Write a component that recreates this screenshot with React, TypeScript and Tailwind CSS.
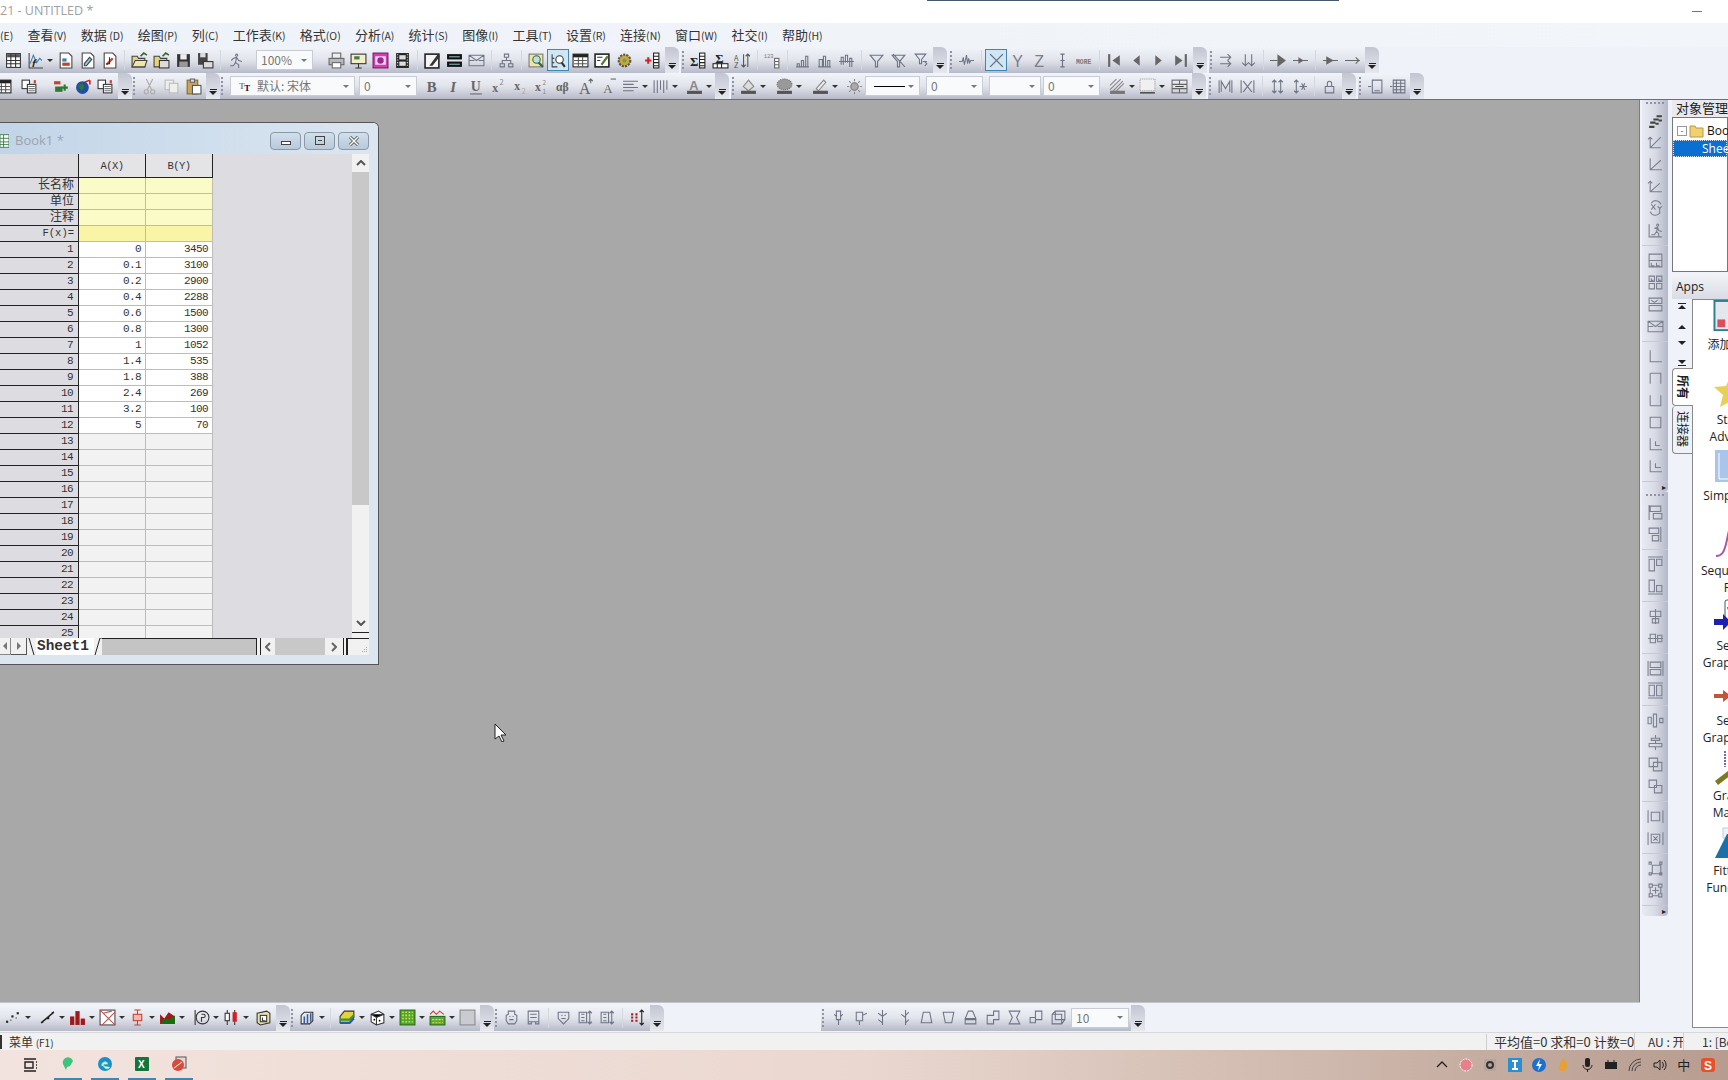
import React from 'react';

const cjk = "font-['Noto_Sans_CJK_SC',sans-serif]";
const mono = "font-['Liberation_Mono','Noto_Sans_CJK_SC',monospace]";

// outline icons, drawn with currentColor
const G: Record<string, string> = {
  runner: 'M9 2a1 1 0 1 0 .1 0M6 6l3-1 2 3 3 1M9 5l-1 5 3 2 0 3M8 10l-2 3-3 0M6 6l-2 2',
  axrun: 'M2 2v12h12M10 2a1 1 0 1 0 .1 0M7 6l3-1 1 3 3 1M10 5l-1 4 2 2v3M9 9l-2 3H4',
  tree: 'M6 2h4v3H6zM2 11h4v3H2zM10 11h4v3h-4zM8 5v3M4 11V8h8v3',
  mail: 'M1 3h14v10H1zM1 3l7 5 7-5M1 8h5M10 8h5',
  filter: 'M2 3h12L9 9v5H7V9z',
  filterx: 'M2 3h12L9 9v5H7V9zM3 2l11 12',
  filterr: 'M3 2h10L9 7v4H7V7zM10 9h4M12 9l2 2-2 2',
  wave: 'M1 9h3l1-4 1 7 2-9 1 8 1-5 1 4 1-2h3',
  arrows2: 'M2 5h10M9 2l3 3-3 3M2 11h10M9 8l3 3-3 3',
  downs: 'M5 2v11M2 10l3 3 3-3M11 2v11M8 10l3 3 3-3',
  barsup: 'M2 14h12M3 14v-3h2v3M7 14V8h2v6M11 14V4h2v10',
  bars2: 'M2 14h12M3 14V7h3v7M7 14V4h2v10M11 14v-6h2v6',
  barsm: 'M1 9h14M3 12V5h2v7M7 10V3h2v7M11 14V6h2v8',
  m: 'M2 2v12M14 2v12M4 13V3l4 7 4-7v10',
  x: 'M2 2v12M14 2v12M4 3l8 10M12 3L4 13',
  updn: 'M5 2v12M3 4l2-2 2 2M3 12l2 2 2-2M11 2v12M9 4l2-2 2 2M9 12l2 2 2-2',
  updn2: 'M5 2v12M3 4l2-2 2 2M3 12l2 2 2-2M8 8h7M10 5l3 6M13 5l-3 6',
  lock: 'M4 8h8v6H4zM6 8V5a2 2 0 0 1 4 0v3',
  frame: 'M1 8h3M5 2h9v12H5zM7 12h5',
  tablef: 'M1 8h2M4 2h11v12H4zM4 5h11M4 8h11M4 11h11M7 2v12M11 2v12',
  ax1: 'M3 3v10h10M3 3l-2 2M3 3l2 2M3 13L13 3',
  ax2: 'M3 2v11h11M3 13L13 4',
  ax3: 'M3 3v10h11M1 5l2-2 2 2M3 13l9-8',
  xy: 'M4 4l4 5M8 4L4 9M10 6l2 2 2-2M12 8v5M3 11a5 5 0 0 0 9 1M13 4a5 5 0 0 0-9-1',
  lay1: 'M2 2h12v12H2zM2 8h12M4 10v3h3M9 10v3h3',
  lay2: 'M2 2h5v5H2zM9 2h5v5H9zM2 9h5v5H2zM9 9h5v5H9zM4 4v2h2M11 4v2h2',
  lay3: 'M2 2h12v5H2zM2 9h12v5H2zM4 4l3 2 3-2',
  sq1: 'M3 2v11h11',
  sq2: 'M3 3h10v10M3 3v10',
  sq3: 'M13 3v10H3M3 3v10',
  sq4: 'M3 3h10v10H3z',
  sq5: 'M3 2v11h11M8 5v4h4',
  sq6: 'M3 2v11h11M8 5v4h5',
  al1: 'M3 2h10v5H3zM6 9h8v5H6zM2 1v14',
  al2: 'M2 2h9v5H2zM5 9h6v5H5zM13 1v14',
  al3: 'M2 3h5v11H2zM9 3h5v6H9zM1 1h14',
  al4: 'M2 2h5v11H2zM9 7h5v6H9zM1 15h14',
  al5: 'M8 1v14M3 3h10v5H3zM5 10h6v4H5z',
  al6: 'M1 8h14M3 4h5v8H3zM10 5h4v6h-4z',
  al7: 'M3 2h10v5H3zM3 9h10v5H3zM1 1v14M15 1v14',
  al8: 'M2 3h5v10H2zM9 3h5v10H9zM1 1h14M1 15h14',
  al9: 'M1 5h3v6H1zM6 2h3v12H6zM12 6h3v4h-3z',
  al10: 'M8 1v3M8 6v3M8 12v3M4 4h8v2H4zM2 9h12v3H2z',
  ov1: 'M2 2h8v8H2zM6 6h8v8H6z',
  ov2: 'M2 2h7v7H2zM7 7h7v7H7z',
  dash1: 'M4 4h8v8H4zM1 2v12M15 2v12',
  dash2: 'M4 4h8v8H4zM6 6l4 4M10 6l-4 4M1 2v12M15 2v12',
  res1: 'M2 2h2v2H2zM12 2h2v2h-2zM2 12h2v2H2zM12 12h2v2h-2zM5 5h8v8H5z',
  res2: 'M2 2h3v3H2zM11 2h3v3h-3zM2 11h3v3H2zM11 11h3v3h-3zM5 3h6M5 13h6M3 5v6M13 5v6M8 5v6M5 8h6',
  fmtl: 'M1 3h14M1 6h10M1 9h14M1 12h10',
  fmtc: 'M2 2v12M5 2v12M8 2v9M11 2v12M14 2v9',
  gp1: 'M5 2h6v3l2 1v5l-2 3H5l-2-3V6l2-1zM6 7h1M9 7h1M6 10h4',
  gp2: 'M3 2h10v10H3zM3 12v2h3v-2M10 12v2h3v-2M5 5h6M5 8h6',
  gp3: 'M3 3h10v6l-5 5-5-5zM6 6h1M9 6h1M6 9h4',
  gp4: 'M2 3h7v10H2zM4 5h3M4 8h3M4 11h3M12 2v12M10 4l2-2 2 2M10 12l2 2 2-2',
  d1: 'M6 2h4v8H6zM8 10v5M4 5l2 2M12 5l-2 2',
  d2: 'M4 3h6v8H4zM7 11v4M10 6l4-2',
  d3: 'M8 1v14M4 4l4 3M12 4L8 7M4 10l4 3',
  d4: 'M9 1v14M12 3L9 6M5 5l4 3M12 10l-3 3',
  tr1: 'M5 3h6l2 10H3zM3 13h10',
  tr2: 'M3 3h10l-2 10H5zM3 3h10',
  tr3: 'M6 2h4l3 7H3zM3 10h10v4H3z',
  tr4: 'M3 6h6V2h5v8H9v4H3z',
  tr5: 'M3 2h10l-3 6 3 6H3l3-6z',
  tr6: 'M7 2h6v8H7zM2 8h5v5H2z',
  tr7: 'M5 2h9v8H5zM2 5l3-3M2 5v9h9l3-4M2 5h9v9',
};

// colour icons
const C: Record<string, React.ReactNode> = {
  stairs: <path d="M9 3h5v2H9zM6 6h5v2H6zM11 7h3v2h-3zM3 9h5v2H3zM8 10h3v2H8zM2 13h5v2H2z" fill="#444" />,
  grid: <><rect x="1.5" y="1.5" width="13" height="13" fill="#fff" stroke="#333" /><rect x="2" y="2" width="12" height="3" fill="#555" /><path d="M1.5 8h13M1.5 11h13M5.5 2v12M10 2v12" stroke="#333" /></>,
  fx: <><path d="M2 1v14h13" fill="none" stroke="#444" /><path d="M3 11l3-8 3 7 3-4 2 2" fill="none" stroke="#3c7fb0" /><text x="4" y="14" fontSize="9" fontStyle="italic" fontWeight="700" fill="#222">f</text></>,
  doc1: <><path d="M3 1h8l3 3v11H3z" fill="#fff" stroke="#444" /><rect x="5" y="6" width="4" height="3" fill="#3c7fb0" /><rect x="5" y="10" width="7" height="3" fill="#c8402e" /></>,
  doc2: <><path d="M3 1h8l3 3v11H3z" fill="#fff" stroke="#444" /><path d="M5 11l5-6 2 2-5 6H5z" fill="#9cc1c8" stroke="#345" /></>,
  doc3: <><path d="M3 1h8l3 3v11H3z" fill="#fff" stroke="#444" /><path d="M5 12l6-6" stroke="#c8402e" strokeWidth="2" /><path d="M8 5v6H5" fill="none" stroke="#333" /></>,
  open: <><path d="M1 14V4h5l1 2h6v8z" fill="#e6d37a" stroke="#444" /><path d="M1 14l3-6h11l-2 6z" fill="#f1e6a8" stroke="#444" /><path d="M9 4l3-3 3 2" fill="none" stroke="#2d6b2d" strokeWidth="1.5" /></>,
  open2: <><path d="M1 14V4h5l1 2h6v8z" fill="#e6d37a" stroke="#444" /><rect x="6" y="8" width="9" height="7" fill="#dcdcdc" stroke="#333" /><path d="M9 4l3-3 3 2" fill="none" stroke="#2d6b2d" strokeWidth="1.5" /></>,
  save: <><path d="M2 2h12v12H2z" fill="#333" /><rect x="5" y="2" width="6" height="5" fill="#eee" /><rect x="4" y="9" width="8" height="5" fill="#999" /></>,
  save2: <><path d="M1 1h9v11H1z" fill="#444" /><rect x="3" y="1" width="5" height="4" fill="#ddd" /><rect x="6" y="9" width="9" height="6" fill="#dcdcdc" stroke="#333" /></>,
  printer: <><rect x="4" y="1" width="8" height="5" fill="#eee" stroke="#666" /><rect x="1" y="6" width="14" height="6" fill="#b5b8bf" stroke="#666" /><rect x="4" y="10" width="8" height="5" fill="#fff" stroke="#666" /></>,
  slide: <><rect x="1" y="2" width="14" height="9" fill="#f3edc8" stroke="#333" /><rect x="4" y="4" width="5" height="3" fill="#4a7a4a" /><path d="M8 11v4M5 15h6" stroke="#333" /></>,
  pink: <><rect x="1" y="1" width="14" height="14" fill="#d63bb8" stroke="#6b2060" /><rect x="3" y="4" width="10" height="8" fill="#eed7e8" /><circle cx="8" cy="8" r="3" fill="#9a2a8a" /></>,
  film: <><rect x="2" y="1" width="12" height="14" fill="#222" /><rect x="5" y="3" width="6" height="4" fill="#ddd" /><rect x="5" y="9" width="6" height="4" fill="#ddd" /><path d="M3.5 2v12M12.5 2v12" stroke="#fff" strokeDasharray="1 1.5" /></>,
  penbox: <><rect x="1" y="2" width="13" height="13" fill="#f4f4f4" stroke="#222" strokeWidth="1.5" /><path d="M5 13L13 2l2 2-7 9z" fill="#333" /></>,
  stack: <><rect x="1" y="2" width="14" height="5" fill="#111" /><rect x="1" y="9" width="14" height="5" fill="#111" /><rect x="3" y="4" width="10" height="1" fill="#8bb" /><rect x="3" y="11" width="10" height="1" fill="#8bb" /></>,
  zoomd: <><rect x="1" y="2" width="13" height="12" fill="#f0e6a0" stroke="#777" /><circle cx="8" cy="7" r="3.5" fill="#bde0d8" stroke="#2b6a55" /><path d="M10 10l4 4" stroke="#2b6a55" strokeWidth="2" /></>,
  zooms: <><path d="M2 2v12h5" fill="none" stroke="#444" /><circle cx="9" cy="7" r="3.5" fill="#fff" stroke="#333" /><path d="M11 10l3 4" stroke="#333" strokeWidth="2" /><path d="M2 6h2M2 10h2" stroke="#444" /></>,
  sheet: <><rect x="1" y="2" width="14" height="12" fill="#fff" stroke="#222" /><rect x="1" y="2" width="14" height="3" fill="#222" /><path d="M2 8h12M2 11h12M6 5v9M10 5v9" stroke="#555" /></>,
  form: <><rect x="1" y="2" width="13" height="12" fill="#fff" stroke="#222" strokeWidth="1.5" /><path d="M7 12l6-8" stroke="#5a7a3a" strokeWidth="2" /><path d="M3 5h5M3 8h3" stroke="#333" /></>,
  gear: <><circle cx="8" cy="8" r="5.5" fill="#c8a83a" stroke="#555" strokeDasharray="2 1" strokeWidth="2" /><circle cx="8" cy="8" r="2" fill="#7a9a5a" /></>,
  addcol: <><path d="M1 8h6M4 5v6" stroke="#d0202a" strokeWidth="2" /><rect x="9" y="1" width="5" height="14" fill="#fff" stroke="#222" /><path d="M9 4h5M9 7h5M9 10h5M9 13h5" stroke="#222" /></>,
  sigc: <><text x="0" y="13" fontSize="12" fontWeight="700" fontFamily="Liberation Serif" fill="#222">Σ</text><rect x="9" y="1" width="5" height="14" fill="#fff" stroke="#222" /><path d="M9 4h5M9 7h5M9 10h5M9 13h5" stroke="#222" /></>,
  sigr: <><text x="3" y="10" fontSize="12" fontWeight="700" fontFamily="Liberation Serif" fill="#222">Σ</text><rect x="1" y="11" width="14" height="4" fill="#fff" stroke="#222" /><path d="M5 11v4M9 11v4" stroke="#222" /></>,
  sort: <><text x="0" y="8" fontSize="7" fill="#555">A</text><text x="0" y="15" fontSize="7" fill="#555">Z</text><path d="M9 2v12M7 12l2 2 2-2M13 14V2M11 4l2-2 2 2" fill="none" stroke="#555" /></>,
  num: <><text x="0" y="6" fontSize="5" fontFamily="Liberation Mono" fill="#777">123</text><rect x="10" y="6" width="4" height="9" fill="#fff" stroke="#666" /><path d="M10 9h4M10 12h4" stroke="#666" /></>,
  X: <path d="M2 2l12 12M14 2L2 14" stroke="#6b7080" strokeWidth="1.3" fill="none" />,
  Y: <text x="2" y="14" fontSize="15" fill="#7a7e8a" fontFamily="Liberation Sans">Y</text>,
  Z: <text x="2" y="14" fontSize="15" fill="#7a7e8a" fontFamily="Liberation Sans">Z</text>,
  I: <path d="M8 2v12M6 2h4M6 14h4M6 8h4" stroke="#6b7080" fill="none" />,
  more: <text x="0" y="11" fontSize="6" fontWeight="700" fontFamily="Liberation Mono" fill="#777">MORE</text>,
  first: <><path d="M3 2v12" stroke="#666" strokeWidth="2" /><path d="M13 3L6 8l7 5z" fill="#666" /></>,
  prev: <path d="M11 3L5 8l6 5z" fill="#666" />,
  next: <path d="M5 3l6 5-6 5z" fill="#666" />,
  last: <><path d="M13 2v12" stroke="#666" strokeWidth="2" /><path d="M3 3l7 5-7 5z" fill="#666" /></>,
  big: <><path d="M0 8h7" stroke="#666" /><path d="M7 2l8 6-8 6z" fill="#666" /></>,
  small: <><path d="M1 8h14" stroke="#666" /><path d="M6 5l5 3-5 3z" fill="#666" /></>,
  rev: <><path d="M1 8h14" stroke="#666" /><path d="M4 4l7 4-7 4z" fill="#666" /></>,
  tip: <path d="M1 8h14M11 5l3 3-3 3" stroke="#666" fill="none" />,
  b1: <><rect x="1" y="3" width="6" height="3" fill="#c8402e" /><rect x="2" y="8" width="7" height="5" fill="#2e7a35" /><path d="M11 6v6M8 9h6" stroke="#2e7a35" strokeWidth="2" /></>,
  b2: <><rect x="1" y="2" width="7" height="8" fill="#fff" stroke="#333" /><rect x="6" y="6" width="8" height="8" fill="#fff" stroke="#333" /><path d="M7 8h6M7 10h6M7 12h6" stroke="#777" /><path d="M13 2v3" stroke="#c8402e" strokeWidth="2" /></>,
  globe: <><circle cx="7" cy="9" r="6" fill="#1f4fa0" /><path d="M3 7l4-2 2 4-3 3z" fill="#2e7a35" /><path d="M9 4l5-2M14 2v4" stroke="#d0202a" strokeWidth="1.5" fill="none" /></>,
  cut: <path d="M5 1l5 10M11 1L6 11M5 11a2 2 0 1 0 .1 0M11 11a2 2 0 1 0 .1 0" stroke="#aaa" fill="none" />,
  copy: <><rect x="2" y="2" width="8" height="9" fill="#eee" stroke="#bbb" /><rect x="6" y="5" width="8" height="9" fill="#eee" stroke="#bbb" /></>,
  paste: <><rect x="2" y="2" width="10" height="13" fill="#c9a45a" stroke="#7a6a3a" /><rect x="5" y="1" width="4" height="3" fill="#ddd" stroke="#666" /><rect x="7" y="7" width="8" height="8" fill="#fff" stroke="#555" /></>,
  B: <text x="2.5" y="13" fontSize="14" fontWeight="700" fontFamily="Liberation Serif" fill="#666">B</text>,
  It: <text x="4" y="13" fontSize="14" fontStyle="italic" fontWeight="700" fontFamily="Liberation Serif" fill="#666">I</text>,
  U: <><text x="2.5" y="12" fontSize="13" fontFamily="Liberation Serif" fontWeight="700" fill="#666">U</text><path d="M2 15h11" stroke="#666" /></>,
  sup: <><text x="2" y="13" fontSize="11" fontWeight="700" fontFamily="Liberation Serif" fill="#666">x</text><text x="9" y="7" fontSize="7" fill="#888">2</text></>,
  sub: <><text x="2" y="11" fontSize="11" fontWeight="700" fontFamily="Liberation Serif" fill="#666">x</text><text x="9" y="15" fontSize="7" fill="#aaa">2</text></>,
  supsub: <><text x="1" y="12" fontSize="11" fontWeight="700" fontFamily="Liberation Serif" fill="#666">x</text><text x="8" y="7" fontSize="6" fill="#888">2</text><text x="8" y="15" fontSize="6" fill="#888">1</text></>,
  ab: <text x="0" y="12" fontSize="11" fontWeight="700" fontFamily="Liberation Serif" fill="#666">αβ</text>,
  Ab: <><text x="1" y="15" fontSize="15" fontFamily="Liberation Serif" fill="#666">A</text><path d="M12 1v4M10 3l2-2 2 2" stroke="#666" fill="none" /></>,
  As: <><text x="3" y="14" fontSize="12" fontFamily="Liberation Serif" fill="#666">A</text><path d="M10 1h5" stroke="#666" /></>,
  colorA: <><text x="3" y="11" fontSize="12" fontWeight="700" fontFamily="Liberation Sans" fill="#888">A</text><rect x="1" y="12" width="14" height="3" fill="#555" /></>,
  bucket: <><path d="M3 8l5-6 5 6-5 4z" fill="#ddd" stroke="#888" /><rect x="1" y="12" width="14" height="3" fill="#555" /></>,
  pattern: <><ellipse cx="8" cy="6" rx="7" ry="5" fill="#999" stroke="#666" strokeDasharray="1 1" /><rect x="1" y="12" width="14" height="3" fill="#555" /></>,
  pencil: <><path d="M4 10l7-8 2 2-7 8z" fill="#eee" stroke="#888" /><rect x="1" y="12" width="14" height="3" fill="#555" /></>,
  bulb: <><circle cx="8" cy="8" r="3.5" fill="#aaa" stroke="#777" /><path d="M8 1v2M8 13v2M1 8h2M13 8h2M3 3l1.5 1.5M13 3l-1.5 1.5M3 13l1.5-1.5M13 13l-1.5-1.5" stroke="#888" /></>,
  hatch: <><path d="M1 11L11 1M3 13L13 3M6 13l8-8M1 7l6-6" stroke="#888" /><rect x="1" y="12" width="14" height="3" fill="#777" /></>,
  dots: <><rect x="1" y="1" width="14" height="11" fill="#f0f0f0" stroke="#999" strokeDasharray="1 1" /><path d="M1 14h14" stroke="#111" /></>,
  table3: <><rect x="1" y="2" width="14" height="12" fill="none" stroke="#666" /><path d="M1 6h14M1 10h14M8 2v4M8 10v4" stroke="#666" /><path d="M4 8h8" stroke="#444" /></>,
  scatter: <><rect x="1" y="11" width="2" height="2" fill="#222" /><rect x="6" y="6" width="2" height="2" fill="#222" /><rect x="11" y="3" width="2" height="2" fill="#222" /><rect x="5" y="10" width="1" height="1" fill="#222" /><rect x="10" y="8" width="1" height="1" fill="#222" /></>,
  linep: <path d="M2 13L14 3M2 13l2-1M14 3l-2 1M7 9h2v-2" stroke="#222" strokeWidth="1.4" fill="none" />,
  redbars: <><rect x="1" y="7" width="4" height="8" fill="#a01818" /><rect x="6" y="2" width="4" height="13" fill="#a01818" /><rect x="11" y="9" width="4" height="6" fill="#a01818" /></>,
  mesh: <><rect x="1" y="1" width="14" height="14" fill="#fff" stroke="#444" /><path d="M1 1l14 14M15 3L3 15M4 4l8-2" stroke="#c05050" /></>,
  boxplot: <><path d="M8 1v14M5 1h6M5 15h6" stroke="#c8402e" /><rect x="4" y="5" width="8" height="6" fill="#f5b8b0" stroke="#c8402e" /></>,
  area: <><path d="M1 14V5l4 4 4-6 6 4v7z" fill="#a01818" /><path d="M1 14l4-5 4 1 6-4v8z" fill="#14700f" /></>,
  polar: <><path d="M2 1v14" stroke="#333" /><circle cx="9" cy="8" r="6" fill="none" stroke="#333" /><path d="M8 5h2a1 1 0 0 1 0 3H8v4" fill="none" stroke="#333" /></>,
  candle: <><path d="M4 1v14M11 1v14" stroke="#333" /><rect x="2" y="4" width="4" height="7" fill="#fff" stroke="#333" /><rect x="9" y="3" width="4" height="9" fill="#d0202a" /></>,
  graph3: <><path d="M2 4l9-2 3 2v9l-9 2-3-2z" fill="#e8e0b0" stroke="#333" /><rect x="5" y="6" width="6" height="6" fill="#fff" stroke="#333" /><path d="M7 8v3h3" stroke="#333" fill="none" /></>,
  bars3d: <><path d="M2 14V6l3-3h8v8l-3 3z" fill="#e8e8f0" stroke="#333" /><path d="M5 14V7M8 14V5M11 12V4" stroke="#3a5a9a" strokeWidth="1.5" /></>,
  ribbon: <><path d="M1 13V7l4-5h9v6l-4 5z" fill="#e6d040" stroke="#333" /><path d="M1 10l9 0 4-4" stroke="#2e9a35" strokeWidth="2" fill="none" /><path d="M1 13h9l4-4" stroke="#2b5ca0" strokeWidth="2" fill="none" /></>,
  dice: <><path d="M2 5l7-3 5 3v8l-7 2-5-3z" fill="#fff" stroke="#333" /><path d="M2 5l5 3 7-3M7 8v7" stroke="#333" /><circle cx="5" cy="10" r=".8" /><circle cx="10" cy="11" r=".8" /></>,
  dots3: <><rect x="1" y="1" width="14" height="14" fill="#4ea832" stroke="#2a6a1a" /><path d="M3 3h10M3 6h10M3 9h10M3 12h10" stroke="#d6e050" strokeDasharray="1.5 1.5" strokeWidth="1.5" /></>,
  peaks: <><path d="M1 5l3-3 3 3 3-3 4 3" fill="none" stroke="#c8402e" /><rect x="1" y="7" width="14" height="8" fill="#5aa838" stroke="#2a6a1a" /><path d="M3 10h10M3 13h10" stroke="#d6e050" strokeDasharray="2 1" /></>,
  plain: <rect x="1" y="1" width="14" height="14" fill="#c8ccd0" stroke="#888" />,
  reddots: <><path d="M2 5h2M6 5h2M2 8h2M6 8h2M2 11h2M6 11h2" stroke="#a02020" strokeWidth="2" /><path d="M12 1v14M10 3l2-2 2 2M10 13l2 2 2-2" stroke="#222" fill="none" /></>,
};

type Item = string | { c: string; w: string; font?: boolean; line?: boolean };

function Glyph({ name, size = 'w-[17px] h-[17px]' }: { name: string; size?: string }) {
  return (
    <svg viewBox="0 0 16 16" className={size}>
      {C[name] ?? <path d={G[name]} fill="none" stroke="currentColor" />}
    </svg>
  );
}

const Drop = () => (
  <span className="w-2 flex items-center justify-center">
    <span className="border-x-[3px] border-x-transparent border-t-[3px] border-t-[#333]" />
  </span>
);

function Combo({ c, w, font, line }: { c: string; w: string; font?: boolean; line?: boolean }) {
  return (
    <div className={`${w} h-5 flex items-center justify-between bg-[#f9fafb] border border-[#c8ccd4] pl-1 pr-0.5 text-[12px] text-[#777] ${cjk}`}>
      <span className="flex items-center gap-1 whitespace-nowrap overflow-hidden">
        {font && (
          <svg viewBox="0 0 16 16" className="w-3.5 h-3.5 ml-1 shrink-0">
            <text x="0" y="11" fontSize="10" fontWeight="700" fill="#888" fontFamily="Liberation Serif">T</text>
            <text x="6" y="14" fontSize="10" fontWeight="700" fill="#111" fontFamily="Liberation Serif">T</text>
          </svg>
        )}
        {line && <span className="w-8 h-px bg-black ml-1" />}
        {c}
      </span>
      <span className="w-3 h-full flex items-center justify-center shrink-0">
        <span className="border-x-[3px] border-x-transparent border-t-[3px] border-t-[#777]" />
      </span>
    </div>
  );
}

function Tool({ it }: { it: Item }) {
  if (typeof it !== 'string') return <Combo {...it} />;
  if (it === '|') {
    return (
      <span className="w-2 h-5 flex justify-center">
        <span className="w-px h-full bg-[#d4d7e0]" />
      </span>
    );
  }
  if (it === ':') return <span className="w-1" />;
  if (it === '.') return <span className="w-0.5" />;
  const drop = it.endsWith('+');
  const sel = it.endsWith('!');
  const name = drop || sel ? it.slice(0, -1) : it;
  return (
    <>
      <span className={`w-[22px] h-[22px] flex items-center justify-center shrink-0 text-[#6f7484] ${sel ? 'border border-[#3f86b0] bg-[#cfe6f5]' : ''}`}>
        <Glyph name={name} />
      </span>
      {drop && <Drop />}
    </>
  );
}

function Bar({ items, grip = true, cap = true, cls = '' }: { items: Item[]; grip?: boolean; cap?: boolean; cls?: string }) {
  return (
    <div className={`h-[26px] flex items-center shrink-0 bg-gradient-to-b from-[#f1f4f9] via-[#e2e4ec] to-[#b7bac8] ${cls}`}>
      {grip && <span className="w-[5px] h-[18px] ml-px border-l-2 border-dotted border-[#8f93a3]" />}
      {items.map((it, i) => <Tool key={i} it={it} />)}
      {cap && (
        <span className="w-[14px] h-full ml-0.5 rounded-tr-md bg-gradient-to-b from-[#c3c6d2] to-[#e6e8ef] flex flex-col items-center justify-end pb-1 gap-px">
          <span className="w-[7px] h-px bg-[#222]" />
          <span className="border-x-[4px] border-x-transparent border-t-[4px] border-t-[#222]" />
        </span>
      )}
    </div>
  );
}

function VBar({ groups }: { groups: string[][] }) {
  return (
    <div className="w-[26px] flex flex-col items-center rounded-b bg-gradient-to-r from-[#e9ebf2] via-[#d8dbe5] to-[#b5b8c7] text-[#7b7f8e]">
      <span className="w-[18px] h-1 mt-0.5 border-t-2 border-dotted border-[#8f93a3]" />
      {groups.map((g, i) => (
        <div key={i} className="flex flex-col items-center w-full border-b border-[#c7cad5] py-[3.5px] last:border-b-0">
          {g.map((n, j) => (
            <span key={j} className="h-[22px] flex items-center justify-center"><Glyph name={n} /></span>
          ))}
        </div>
      ))}
      <span className="self-end pr-0.5 text-[8px] leading-[10px] text-[#222]">▸</span>
    </div>
  );
}

const MENU = [
  ['', '(E)'], ['查看', '(V)'], ['数据', ' (D)'], ['绘图', '(P)'], ['列', '(C)'], ['工作表', '(K)'], ['格式', '(O)'], ['分析', '(A)'],
  ['统计', '(S)'], ['图像', '(I)'], ['工具', '(T)'], ['设置', '(R)'], ['连接', '(N)'], ['窗口', '(W)'], ['社交', '(I)'], ['帮助', '(H)'],
];

const DATA: [string, string][] = [
  ['0', '3450'], ['0.1', '3100'], ['0.2', '2900'], ['0.4', '2288'], ['0.6', '1500'], ['0.8', '1300'],
  ['1', '1052'], ['1.4', '535'], ['1.8', '388'], ['2.4', '269'], ['3.2', '100'], ['5', '70'],
];

const APPS: { icon: React.ReactNode; lines: string[]; h: string }[] = [
  { h: 'h-[59px]', lines: ['Stats', 'Advisor'], icon: <path d="M18 2l5 11 12 1-9 8 3 12-11-6-11 6 3-12-9-8 12-1z" fill="#e8cf5a" /> },
  { h: 'h-[42px]', lines: ['Simple Fit'], icon: <><rect x="2" y="1" width="32" height="32" fill="#a9c6e8" /><path d="M6 4v26h26" stroke="#fff" fill="none" /></> },
  { h: 'h-[58px]', lines: ['Sequential', 'Fit'], icon: <path d="M3 32c6 0 8-4 10-12s3-18 6-18 3 14 5 22 5 8 10 8" fill="none" stroke="#a65aa8" strokeWidth="2" /> },
  { h: 'h-[41px]', lines: ['Send', 'Graphs to'], icon: <><rect x="12" y="1" width="22" height="24" rx="2" fill="#fff" stroke="#456" /><path d="M15 8l3 9 4-9" stroke="#345" fill="none" strokeWidth="2" /><path d="M1 20h9v-5l8 8-8 8v-5H1z" fill="#1f1fb0" /></> },
  { h: 'h-[41px]', lines: ['Send', 'Graphs to '], icon: <><path d="M16 1v22" stroke="#c0a898" /><path d="M1 20h9v-4l8 6-8 6v-4H1z" fill="#c0563a" /></> },
  { h: 'h-[41px]', lines: ['Graph', 'Maker'], icon: <><path d="M12 2v16M16 2v16M20 2v16M24 2v16" stroke="#7a6aa0" strokeWidth="2" strokeDasharray="2 1" /><path d="M2 32l26-20 3 4-26 20z" fill="#7a7a22" /></> },
  { h: 'h-[41px]', lines: ['Fitting', 'Function'], icon: <><path d="M10 4h20v10H10z" fill="#eef3f7" stroke="#bcd" /><path d="M2 34L14 10h20v24z" fill="#1d6fa8" /></> },
];

export default function App() {
  return (
    <div className={`w-[1728px] h-[1080px] overflow-hidden flex flex-col bg-[#eff3f9] relative ${cjk}`}>
      {/* title bar */}
      <div className="h-[23px] bg-white flex items-center justify-between shrink-0 relative">
        <span className="font-['Open_Sans',sans-serif] text-[12.5px] text-[#a0a0a0] whitespace-nowrap">21 - UNTITLED *</span>
        <span className="w-[10px] h-px bg-[#777] mr-[26px]" />
        <span className="absolute left-[927px] top-0 w-[412px] h-px bg-[#46586e]" />
      </div>

      {/* menu */}
      <div className="h-[24px] flex items-center gap-[14.2px] text-[13px] text-[#333] shrink-0 bg-gradient-to-r from-[#eef3f9] to-[#f2f5fa]">
        {MENU.map(([a, b], i) => (
          <span key={i} className="whitespace-pre">
            {a}<span className="text-[10.5px]">{b}</span>
          </span>
        ))}
      </div>

      {/* standard toolbars */}
      <div className="h-[26px] flex shrink-0">
        <Bar grip={false} cls="pl-0.5" items={['grid', 'fx+', 'doc1', 'doc2', 'doc3', '|', 'open', 'open2', 'save', 'save2', '|', 'runner', ':', ':', '.', { c: '100%', w: 'w-[57px]' }, ':', ':', '.', '.', 'printer', 'slide', 'pink', 'film', '|', 'penbox', 'stack', 'mail', '|', 'tree', '|', 'zoomd', 'zooms!', 'sheet', 'form', 'gear', '.', ':', 'addcol']} />
        <span className="w-0.5" />
        <Bar items={['sigc', 'sigr', 'sort', '|', 'num', '|', 'barsup', 'bars2', 'barsm', '|', 'filter', 'filterx', 'filterr']} />
        <span className="w-0.5" />
        <Bar items={['wave', '|', 'X!', 'Y', 'Z', 'I', 'more', '|', 'first', 'prev', 'next', 'last']} />
        <span className="w-0.5" />
        <Bar items={['arrows2', 'downs', '|', 'big', 'small', '|', 'rev', 'tip']} />
      </div>
      <div className="h-[26px] flex shrink-0">
        <Bar grip={false} cls="-ml-[8px]" items={['sheet', ':', 'b2', ':', ':', '.', 'b1', 'globe', 'b2']} />
        <Bar items={['cut', 'copy', 'paste']} />
        <Bar cls="text-[#888]" items={[':', { c: '默认: 宋体', w: 'w-[125px]', font: true }, ':', { c: '0', w: 'w-[58px]' }, ':', 'B', 'It', 'U', 'sup', 'sub', 'supsub', 'ab', 'Ab', 'As', 'fmtl+', 'fmtc+', ':', 'colorA+']} />
        <span className="w-0.5" />
        <Bar items={['bucket+', ':', '.', 'pattern+', ':', '.', 'pencil+', ':', 'bulb', { c: '', w: 'w-[55px]', line: true }, ':', '.', { c: '0', w: 'w-[57px]' }, ':', '.', { c: '', w: 'w-[52px]' }, '.', { c: '0', w: 'w-[57px]' }, ':', '.', 'hatch+', 'dots+', '.', 'table3']} />
        <span className="w-0.5" />
        <Bar items={['m', 'x', '|', 'updn', 'updn2', '|', 'lock']} />
        <span className="w-0.5" />
        <Bar items={['frame', 'tablef']} />
      </div>

      {/* workspace */}
      <div className="flex-1 flex min-h-0 border-t border-[#6f6f6f]">
        <div className="w-[1640px] flex flex-col shrink-0">
          <div className="flex-1 bg-[#a8a8a8] border-r border-[#7c7c7c] relative">
            <Workbook />
            <svg viewBox="0 0 12 19" className="absolute left-[494px] top-[623px] w-3 h-[19px]">
              <path d="M1 1v15l4-3 3 6 2-1-3-6h5z" fill="#fff" stroke="#222" />
            </svg>
          </div>
          <div className="h-[30px] flex items-center shrink-0 border-t border-[#c4c4c8]">
            <Bar grip={false} cls="pl-0.5" items={['scatter+', ':', 'linep+', 'redbars+', 'mesh+', 'boxplot+', 'area+', ':', 'polar+', 'candle+', '.', 'graph3']} />
            <Bar items={['bars3d+', '|', '.', 'ribbon+', 'dice+', 'dots3+', 'peaks+', 'plain']} />
            <Bar items={['gp1', 'gp2', '|', 'gp3', 'gp4', 'gp4', '|', 'reddots']} />
            <span className="w-[157px]" />
            <Bar items={['d1', 'd2', 'd3', 'd4', 'tr1', 'tr2', 'tr3', 'tr4', 'tr5', 'tr6', 'tr7', '.', { c: '10', w: 'w-[58px]' }]} />
          </div>
        </div>

        {/* right side toolbars and panels */}
        <div className="flex-1 flex min-w-0 pl-0.5 gap-1">
          <div className="flex flex-col w-[26px] shrink-0">
            <VBar groups={[['stairs', 'ax1', 'ax2', 'ax3', 'xy', 'axrun'], ['lay1', 'lay2', 'lay3', 'mail'], ['sq1', 'sq2', 'sq3', 'sq4', 'sq5', 'sq6']]} />
            <VBar groups={[['al1', 'al2'], ['al3', 'al4'], ['al5', 'al6'], ['al7', 'al8'], ['al9', 'al10', 'ov1', 'ov2'], ['dash1', 'dash2'], ['res1', 'res2']]} />
          </div>
          <div className="flex-1 min-w-0 flex flex-col overflow-hidden pb-1">
            <div className="h-[17px] text-[13px] leading-[15px] text-[#222] bg-[#e9e9ee] whitespace-nowrap pl-1">对象管理器</div>
            <div className="h-[155px] shrink-0 border border-[#777] bg-white pt-1 font-['Open_Sans',sans-serif] text-[12px] whitespace-nowrap">
              <div className="h-[18px] flex items-center pl-1 gap-0.5">
                <span className="w-[10px] h-[10px] shrink-0 border border-[#999] text-[9px] leading-[7px] text-center text-[#555]">-</span>
                <svg viewBox="0 0 16 14" className="w-4 h-3.5 shrink-0"><path d="M1 13V2h5l1 2h7v9z" fill="#f0d070" stroke="#b89a40" /></svg>
                <span className="text-[#111]">Book1</span>
              </div>
              <div className="h-[17px] flex items-center bg-[#0a6fd0] text-white pl-[28px] border border-dotted border-[#cfe3f7]">Sheet1</div>
            </div>
            <div className="h-[24px] mt-[3px] shrink-0 flex items-center pl-1 bg-gradient-to-b from-[#f0f2f6] to-[#d9dce4] font-['Open_Sans',sans-serif] text-[12px] text-[#222]">Apps</div>
            <div className="flex-1 flex min-h-0">
              <div className="w-[20px] shrink-0 flex flex-col items-center pt-1 text-[#222]">
                <span className="h-4 flex flex-col items-center"><span className="w-2 h-px bg-[#222]" /><span className="mt-px border-x-[4px] border-x-transparent border-b-[4px] border-b-[#222]" /></span>
                <span className="h-4 flex items-center"><span className="border-x-[4px] border-x-transparent border-b-[4px] border-b-[#222]" /></span>
                <span className="h-4 flex items-center"><span className="border-x-[4px] border-x-transparent border-t-[4px] border-t-[#222]" /></span>
                <span className="h-[15px] flex flex-col items-center justify-end"><span className="border-x-[4px] border-x-transparent border-t-[4px] border-t-[#222]" /><span className="mt-px w-2 h-px bg-[#222]" /></span>
                <span className="mt-0.5 self-stretch -mr-px z-10 bg-white border-y border-l border-[#8a8a8a] rounded-l flex items-center justify-center h-[38px]">
                  <span className="[writing-mode:vertical-rl] [text-orientation:sideways] text-[12px] font-bold leading-[14px]">所有</span>
                </span>
                <span className="self-stretch border-b border-l border-[#8a8a8a] rounded-l flex items-center justify-center h-[48px]">
                  <span className="[writing-mode:vertical-rl] [text-orientation:sideways] text-[12px] leading-[14px]">连接器</span>
                </span>
              </div>
              <div className="w-[76px] shrink-0 border-l border-t border-b border-[#8a8a8a] bg-white font-['Open_Sans',sans-serif] text-[12px] leading-[17px] text-[#222]">
                <div className="h-[52px] flex flex-col items-center justify-end">
                  <svg viewBox="0 0 36 36" className="w-9 h-9">
                    <rect x="1" y="1" width="34" height="30" fill="#e4e8ec" stroke="#2f7f8f" strokeWidth="2" />
                    <rect x="4" y="20" width="8" height="8" fill="#d8505a" />
                  </svg>
                  <span className={`${cjk} whitespace-nowrap`}>添加App</span>
                </div>
                {APPS.map((a, i) => (
                  <div key={i} className="flex flex-col items-center">
                    <div className={`${a.h} flex items-end justify-center pb-0.5`}>
                      <svg viewBox="0 0 36 36" className="w-9 h-9">{a.icon}</svg>
                    </div>
                    {a.lines.map(l => <span key={l} className="whitespace-nowrap">{l}</span>)}
                  </div>
                ))}
              </div>
            </div>
          </div>
        </div>
      </div>

      {/* status bar */}
      <div className="h-[18px] flex items-center shrink-0 bg-[#f1f1f1] border-t border-[#d8d8d8] text-[12px] text-[#333] whitespace-nowrap">
        <span className="w-0.5 h-3.5 bg-[#333] mr-[7px]" />
        <span>菜单 <span className="text-[10px]">(F1)</span></span>
        <span className="ml-auto pl-[7px] w-[148px] border-l border-[#d0d0d0] text-[13px] leading-4">平均值=0 求和=0 计数=0</span>
        <span className="w-[49px] pl-[13px] border-l border-[#d0d0d0]">AU : 开</span>
        <span className="w-[45px] pl-[18px] border-l border-[#d0d0d0] overflow-hidden">1: [Book1]</span>
      </div>

      {/* windows taskbar */}
      <div className="h-[30px] flex items-center shrink-0 bg-gradient-to-r from-[#f3e3de] via-[#ead8d0] to-[#b79c8f] relative">
        <svg viewBox="0 0 16 16" className="w-4 h-4 ml-[22px]"><path d="M2 2h12M2 14h12M3 5h8v6H3zM14 5h1M14 8h1M14 11h1" fill="none" stroke="#222" strokeWidth="1.4" /></svg>
        <span className="ml-[16px] w-[28px] h-full flex items-center justify-center border-b-2 border-[#3f86b0]">
          <svg viewBox="0 0 16 16" className="w-4 h-4"><path d="M3 8a5 5 0 0 1 10-3l-3 5-3 1-1 3z" fill="#3cc47c" /></svg>
        </span>
        <span className="ml-[9px] w-[28px] h-full flex items-center justify-center border-b-2 border-[#3f86b0]">
          <svg viewBox="0 0 16 16" className="w-4 h-4"><circle cx="8" cy="8" r="7" fill="#1d8fc8" /><path d="M5 10a3 3 0 0 1 6-2H7a3 3 0 0 0 6 3" fill="#fff" stroke="#7fe0b0" /></svg>
        </span>
        <span className="ml-[9px] w-[28px] h-full flex items-center justify-center border-b-2 border-[#3f86b0]">
          <svg viewBox="0 0 16 16" className="w-4 h-4"><rect x="1" y="1" width="14" height="14" rx="1" fill="#13743c" /><text x="4" y="12" fontSize="10" fontWeight="700" fill="#fff" fontFamily="Liberation Sans">X</text></svg>
        </span>
        <span className="ml-[9px] w-[28px] h-full flex items-center justify-center border-b-2 border-[#3f86b0]">
          <svg viewBox="0 0 16 16" className="w-4 h-4"><rect x="5" y="1" width="10" height="11" fill="#e8d8d8" stroke="#555" /><circle cx="7" cy="9" r="6" fill="#d84a3a" /><path d="M3 12l8-6" stroke="#fff" /></svg>
        </span>
        <div className="ml-auto flex items-center gap-[8.2px] pr-[12px] text-[#222]">
          <svg viewBox="0 0 16 16" className="w-4 h-4"><path d="M3 10l5-5 5 5" fill="none" stroke="#222" strokeWidth="1.3" /></svg>
          <svg viewBox="0 0 16 16" className="w-4 h-4"><circle cx="8" cy="8" r="6" fill="#e8808a" stroke="#fff" strokeDasharray="2 1" /></svg>
          <svg viewBox="0 0 16 16" className="w-4 h-4"><rect x="2" y="2" width="12" height="12" fill="#b8a49a" /><circle cx="8" cy="8" r="3" fill="none" stroke="#333" strokeWidth="2" /></svg>
          <svg viewBox="0 0 16 16" className="w-4 h-4"><rect x="1" y="1" width="14" height="14" fill="#2b8fd0" /><path d="M5 4h6M5 12h6M8 4v8" stroke="#fff" strokeWidth="2" /></svg>
          <svg viewBox="0 0 16 16" className="w-4 h-4"><circle cx="8" cy="8" r="7" fill="#1d6fd0" /><path d="M9 2L5 9h3l-1 5 4-7H8z" fill="#fff" /></svg>
          <svg viewBox="0 0 16 16" className="w-4 h-4"><path d="M8 1c4 4 5 7 3 11-2 3-6 3-7 0-1-4 2-5 4-11z" fill="#e8a030" /></svg>
          <svg viewBox="0 0 16 16" className="w-4 h-4"><rect x="6" y="1" width="5" height="9" rx="2" fill="#222" /><path d="M4 8a4 4 0 0 0 9 0M8.5 12v3" fill="none" stroke="#222" /></svg>
          <svg viewBox="0 0 16 16" className="w-4 h-4"><rect x="2" y="5" width="12" height="7" fill="#222" /><path d="M5 5V3M11 5V3" stroke="#222" /></svg>
          <svg viewBox="0 0 16 16" className="w-4 h-4"><path d="M2 14a12 12 0 0 1 12-12M5 14a9 9 0 0 1 9-9M8 14a6 6 0 0 1 6-6" fill="none" stroke="#444" /></svg>
          <svg viewBox="0 0 16 16" className="w-4 h-4"><path d="M2 6h3l3-3v10l-3-3H2zM10 5a4 4 0 0 1 0 6M12 3a7 7 0 0 1 0 10" fill="none" stroke="#222" /></svg>
          <span className="text-[13px] leading-4 w-4 text-center">中</span>
          <svg viewBox="0 0 16 16" className="w-4 h-4"><rect x="1" y="1" width="14" height="14" rx="3" fill="#e8502a" /><text x="4" y="13" fontSize="12" fontWeight="700" fill="#fff" fontFamily="Liberation Sans">S</text></svg>
        </div>
      </div>
    </div>
  );
}

function Workbook() {
  const rows = Array.from({ length: 25 }, (_, i) => i);
  const label = 'h-4 flex items-center justify-end border-b';
  return (
    <div className="absolute left-0 top-[22px] w-[379px] h-[543px] rounded-tr-md border border-l-0 border-[#555] bg-[#dbe6f1] flex flex-col overflow-hidden">
      {/* caption */}
      <div className="h-[31px] pt-1 flex items-center shrink-0 bg-gradient-to-r from-[#c2d5e8] to-[#dbe6f1]">
        <svg viewBox="0 0 10 14" className="w-[9px] h-3.5"><rect x="0" y="0" width="10" height="14" fill="#fff" stroke="#3a7a4a" /><path d="M0 4h10M0 8h10M0 11h10M4 0v14" stroke="#3a7a4a" /></svg>
        <span className="ml-1.5 font-['Open_Sans',sans-serif] text-[13px] text-[#9ba4ae]">Book1 *</span>
        <div className="ml-auto mr-[9px] flex gap-[3px]">
          {['min', 'max', 'close'].map(b => (
            <span key={b} className="w-[31px] h-[18px] flex items-center justify-center border border-[#8a98a8] rounded-sm bg-gradient-to-b from-[#d2dfec] to-[#b8c9da]">
              {b === 'min' && <span className="w-[10px] h-1 mt-1 border border-[#444] bg-white" />}
              {b === 'max' && <span className="w-[10px] h-[9px] border border-[#444] flex items-center justify-center"><span className="w-1 h-px bg-[#444]" /></span>}
              {b === 'close' && (
                <svg viewBox="0 0 12 10" className="w-3 h-2.5"><path d="M2 1l8 8M10 1L2 9" stroke="#444" strokeWidth="3" /><path d="M2 1l8 8M10 1L2 9" stroke="#fff" strokeWidth="1.5" /></svg>
              )}
            </span>
          ))}
        </div>
      </div>

      {/* sheet */}
      <div className={`flex-1 min-h-0 mr-[9px] flex flex-col bg-[#dddde1] ${mono} text-[11px] tracking-[-0.6px] text-[#333]`}>
        <div className="flex-1 min-h-0 flex">
          <div className="flex-1 flex flex-col overflow-hidden">
            <div className="h-[24px] flex shrink-0">
              <span className="w-[79px] border-b border-r border-[#222] bg-[#dddde1]" />
              <span className="w-[67px] pt-0.5 flex items-center justify-center border-b border-r border-[#222] bg-[#e4e4e6] text-[10.5px]">A(X)</span>
              <span className="w-[67px] pt-0.5 flex items-center justify-center border-b border-r border-[#222] bg-[#e4e4e6] text-[10.5px]">B(Y)</span>
            </div>
            {['长名称', '单位', '注释', 'F(x)='].map((l, i) => (
              <div key={l} className="flex shrink-0">
                <span className={`w-[79px] ${label} border-r border-[#222] pr-[4px] bg-[#dddde1] ${i === 3 ? 'text-[10.5px]' : 'text-[12px]'} tracking-normal`}>{l}</span>
                <span className={`w-[67px] h-4 border-r border-b border-[#bdbdb0] ${i === 3 ? 'bg-[#faf4a6]' : 'bg-[#fbfbc8]'}`} />
                <span className={`w-[67px] h-4 border-r border-b border-[#bdbdb0] ${i === 3 ? 'bg-[#faf4a6]' : 'bg-[#fbfbc8]'}`} />
              </div>
            ))}
            {rows.map(i => {
              const d = DATA[i];
              const cell = `w-[67px] h-4 flex items-center justify-end pr-1 border-r border-b border-[#bcbcbc] ${d ? 'bg-white' : 'bg-[#f2f2f2]'}`;
              return (
                <div key={i} className="flex shrink-0">
                  <span className={`w-[79px] ${label} border-r border-[#222] pr-[5px] bg-[#dddde1]`}>{i + 1}</span>
                  <span className={cell}>{d?.[0]}</span>
                  <span className={cell}>{d?.[1]}</span>
                </div>
              );
            })}
          </div>
          {/* vertical scrollbar */}
          <div className="w-[17px] shrink-0 flex flex-col items-center bg-[#f1f1f1]">
            <span className="h-[18px] flex items-center"><svg viewBox="0 0 10 6" className="w-2.5 h-1.5"><path d="M1 5l4-4 4 4" fill="none" stroke="#555" strokeWidth="2" /></svg></span>
            <span className="w-full h-[333px] bg-[#c8c8c8]" />
            <span className="mt-auto mb-[3px] h-[13px] flex items-center"><svg viewBox="0 0 10 6" className="w-2.5 h-1.5"><path d="M1 1l4 4 4-4" fill="none" stroke="#555" strokeWidth="2" /></svg></span>
            <span className="w-full h-[6px] border-t border-[#222]" />
          </div>
        </div>

        {/* sheet tabs */}
        <div className="h-[17px] flex shrink-0 bg-[#f1f1f1]">
          <span className="w-[11px] flex items-center justify-center border-r border-b border-[#888]">
            <span className="border-y-[4px] border-y-transparent border-r-[4px] border-r-[#777]" />
          </span>
          <span className="w-[16px] flex items-center justify-center border-r border-b border-[#555]">
            <span className="border-y-[4px] border-y-transparent border-l-[4px] border-l-[#777]" />
          </span>
          <svg viewBox="0 0 9 17" className="w-[9px] h-[17px] shrink-0"><path d="M2 0l5 17" stroke="#222" fill="none" /></svg>
          <span className="w-[58px] pl-px text-[14.4px] leading-[17px] tracking-normal bg-white font-bold font-['Liberation_Mono',monospace] whitespace-nowrap">Sheet1</span>
          <svg viewBox="0 0 8 17" className="w-2 h-[17px] shrink-0"><path d="M1 17L6 0" stroke="#222" fill="none" /><path d="M6 0h2" stroke="#222" /></svg>
          <span className="w-[154px] bg-[#c4c4c4] border-t border-[#222]" />
          <span className="w-[5px] border-l border-r border-[#222]" />
          <span className="w-[14px] flex items-center justify-center"><svg viewBox="0 0 6 10" className="w-1.5 h-2.5"><path d="M5 1L1 5l4 4" fill="none" stroke="#666" strokeWidth="2" /></svg></span>
          <span className="w-[50px] bg-[#c8c8c8]" />
          <span className="w-[18px] flex items-center justify-center"><svg viewBox="0 0 6 10" className="w-1.5 h-2.5"><path d="M1 1l4 4-4 4" fill="none" stroke="#666" strokeWidth="2" /></svg></span>
          <span className="w-[4px] border-l border-r border-[#222]" />
          <span className="flex-1 border-t border-l border-[#222] flex items-end justify-end pr-px pb-px">
            <svg viewBox="0 0 8 8" className="w-2 h-2"><path d="M6 1h1v1H6zM4 3h1v1H4zM6 3h1v1H6zM2 5h1v1H2zM4 5h1v1H4zM6 5h1v1H6z" fill="#aaa" /></svg>
          </span>
        </div>
      </div>
      <div className="h-[9px] shrink-0" />
    </div>
  );
}
